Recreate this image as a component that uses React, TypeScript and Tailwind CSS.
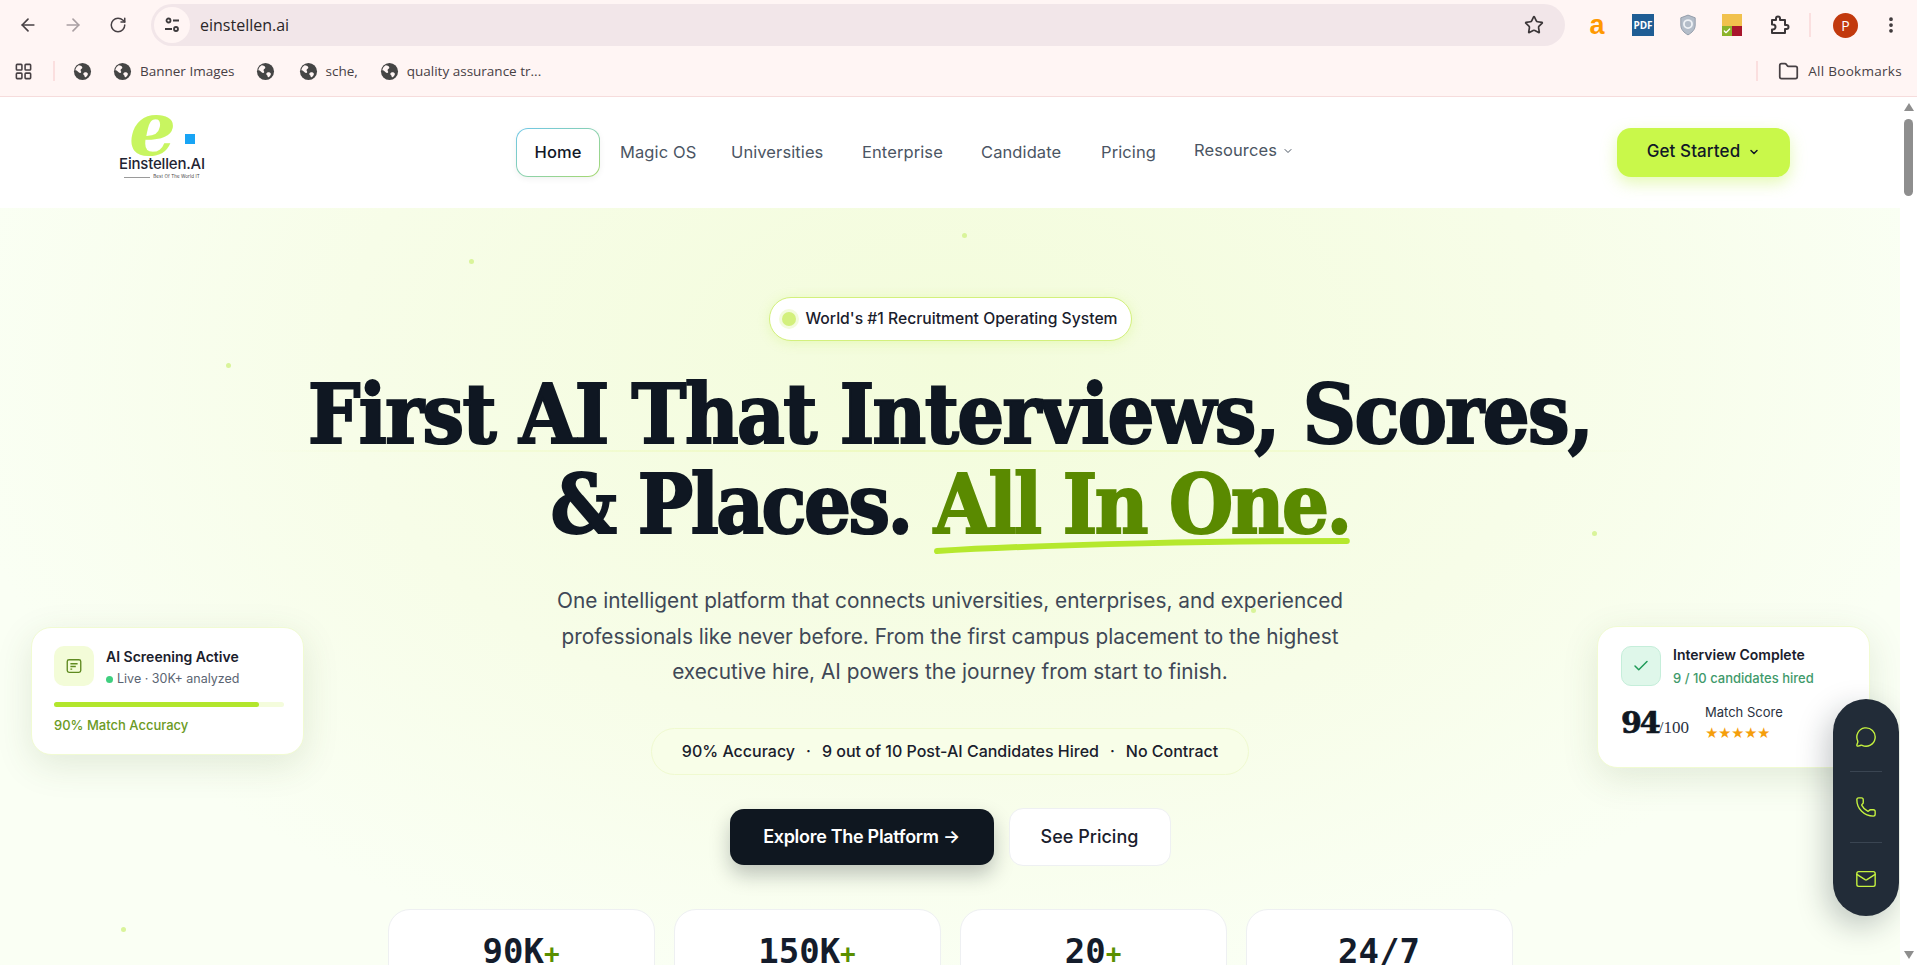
import React from "react";
import {
  ArrowLeft,
  ArrowRight,
  Check,
  ChevronDown,
  Folder,
  LayoutGrid,
  Mail,
  MessageCircle,
  MoreVertical,
  Phone,
  RotateCw,
  Star,
} from "lucide-react";

const body = "font-['Inter',sans-serif]";

function GlobeIcon() {
  return (
    <svg viewBox="0 0 20 20" className="h-[19px] w-[19px] shrink-0">
      <circle cx="10" cy="10" r="9" fill="#454545" />
      <path
        d="M6 3.5c2 .2 3.6 1 3.8 2.2.2 1.4-1.6 1.4-1.8 2.6-.2 1 1 1.4.6 2.6-.4 1-2 .6-3-.4C4.300 9.200 3 8.500 2.400 8.800 2.800 6.400 4 4.600 6 3.500zM12 11c1.400-.4 3 .2 3.600 1 .4.800-.6 2.800-2 3.800-.8.600-1.400.2-1.400-.8 0-1-1.600-1.600-1.400-2.600.1-.6.800-1.200 1.200-1.400z"
        fill="#fff5f4"
      />
    </svg>
  );
}

function Browser() {
  return (
    <div className="h-[97px] shrink-0 border-b border-[#f6dcdc] bg-[#fff5f4] font-['Open_Sans',sans-serif] text-[#474044]">
      <div className="flex h-[49px] items-center pt-[1px]">
        <ArrowLeft className="ml-[18px] h-5 w-5" strokeWidth={2} />
        <ArrowRight className="ml-[25px] h-5 w-5 text-[#a99fa2]" strokeWidth={2} />
        <RotateCw className="ml-[26px] h-[18px] w-[18px]" strokeWidth={2} />
        <div className="ml-[24px] flex h-[42px] w-[1414px] items-center rounded-full bg-[#f2e6e9] pl-[3px] pr-[21px]">
          <div className="flex h-9 w-9 items-center justify-center rounded-full bg-[#fff5f4]">
            <svg viewBox="0 0 20 20" className="h-5 w-5" fill="none" stroke="#3d3a3c" strokeWidth="1.8">
              <circle cx="6.500" cy="5.500" r="2" />
              <path d="M11 5.500h6M3 14h7" />
              <circle cx="14" cy="14" r="2" />
            </svg>
          </div>
          <span className="ml-[10px] text-[16px] text-[#2a2628]">einstellen.ai</span>
          <Star className="ml-auto h-5 w-5 text-[#3b3638]" strokeWidth={2} />
        </div>
        <span className="ml-[22px] w-[20px] text-center font-['Liberation_Sans',sans-serif] text-[27px] font-bold leading-none text-[#ff9900]">
          a
        </span>
        <div className="ml-[25px] flex h-[22px] w-[22px] items-center justify-center bg-[#1f5d94] text-[10px] font-bold text-white">
          PDF
        </div>
        <svg viewBox="0 0 20 24" className="ml-[25px] h-[22px] w-[18px]">
          <path d="M10 1l8 3v8c0 5-3.500 8.500-8 11-4.500-2.500-8-6-8-11V4z" fill="#b4bdc9" stroke="#8e98a6" />
          <circle cx="10" cy="11" r="4.500" fill="none" stroke="#eef1f5" strokeWidth="2" />
        </svg>
        <div className="ml-[25px] flex h-[22px] w-[20px] flex-col">
          <div className="h-[12px] bg-[#f1c14d]" />
          <div className="flex h-[10px]">
            <div className="flex flex-1 items-center justify-center bg-[#8cb32b]">
              <Check className="h-2 w-2 text-white" strokeWidth={4} />
            </div>
            <div className="flex-1 bg-[#a8162c]" />
          </div>
        </div>
        <svg viewBox="0 0 22 22" className="ml-[26px] h-[22px] w-[22px]" fill="none" stroke="#3b3638" strokeWidth="2" strokeLinejoin="round">
          <path d="M4 6h4V4.500a2 2 0 014 0V6h5v5h1.500a2 2 0 010 4H17v4H4v-3.500h1a2.500 2.500 0 000-5H4z" />
        </svg>
        <div className="ml-[19px] h-[24px] w-[2px] bg-[#fbdfdf]" />
        <div className="ml-[22px] flex h-[25px] w-[25px] items-center justify-center rounded-full bg-[#c2390d] text-[14px] text-white">
          P
        </div>
        <MoreVertical className="ml-[23px] h-5 w-5 text-[#3b3638]" strokeWidth={2.500} />
      </div>
      <div className="flex h-[44px] items-center text-[13.500px]">
        <LayoutGrid className="ml-[14px] h-[19px] w-[19px]" strokeWidth={2} />
        <div className="ml-[20px] h-[20px] w-[2px] bg-[#fbdfdf]" />
        <div className="ml-[18px]">
          <GlobeIcon />
        </div>
        <div className="ml-[21px] flex items-center gap-[8px]">
          <GlobeIcon />
          <span>Banner Images</span>
        </div>
        <div className="ml-[21px]">
          <GlobeIcon />
        </div>
        <div className="ml-[24px] flex items-center gap-[8px]">
          <GlobeIcon />
          <span>sche,</span>
        </div>
        <div className="ml-[22px] flex items-center gap-[8px]">
          <GlobeIcon />
          <span>quality assurance tr...</span>
        </div>
        <div className="ml-auto h-[20px] w-[2px] bg-[#fbdfdf]" />
        <Folder className="ml-[20px] h-[21px] w-[21px]" strokeWidth={2} />
        <span className="ml-[9px] mr-[15px] tracking-[0.3px]">All Bookmarks</span>
      </div>
    </div>
  );
}

function Logo() {
  return (
    <div className="mb-[6px] ml-[117px] flex w-[90px] flex-col items-center">
      <div className="relative h-[36px] w-[90px]">
        <span className="absolute left-[12px] top-[-7px] font-['DejaVu_Serif',serif] text-[74px] font-bold italic leading-[36px] text-[#c8f560]">
          e
        </span>
        <div className="absolute left-[68px] top-[16px] h-[10px] w-[10px] bg-[#18a4f5]" />
      </div>
      <span className="text-[15px] font-medium leading-[20px] tracking-[-0.2px] text-[#1f2433]">Einstellen.AI</span>
      <div className="flex items-center gap-[3px]">
        <div className="h-px w-[26px] bg-[#9a9a9a]" />
        <span className="text-[4.500px] leading-[6px] text-[#444]">Best Of The World IT</span>
      </div>
    </div>
  );
}

function Nav() {
  const links = [
    { label: "Magic OS", width: "w-[73px]", gap: "ml-[20px]" },
    { label: "Universities", width: "w-[93px]", gap: "ml-[38px]" },
    { label: "Enterprise", width: "w-[81px]", gap: "ml-[38px]" },
    { label: "Candidate", width: "w-[82px]", gap: "ml-[38px]" },
    { label: "Pricing", width: "w-[54px]", gap: "ml-[38px]" },
  ];
  return (
    <div className="flex h-[111px] shrink-0 items-center bg-white pb-[1px] text-[16.500px] tracking-[0.1px] text-[#4b5563]">
      <Logo />
      <div className="ml-[309px] h-[49px] w-[84px] rounded-[12px] bg-gradient-to-br from-[#6ec6e8] to-[#a5d86a] p-px shadow-[0_2px_6px_rgba(0,0,0,0.06)]">
        <div className="flex h-full w-full items-center justify-center rounded-[11px] bg-white font-medium text-[#111827]">
          Home
        </div>
      </div>
      {links.map((link) => (
        <span key={link.label} className={`${link.gap} ${link.width} whitespace-nowrap`}>
          {link.label}
        </span>
      ))}
      <span className="mb-[3px] ml-[39px] flex items-center gap-[5px]">
        Resources
        <ChevronDown className="h-3 w-3" />
      </span>
      <button className="ml-[323px] flex h-[49px] w-[173px] items-center justify-center gap-[8px] rounded-[14px] bg-[#c9f84a] text-[17px] font-medium text-[#111827] shadow-[0_6px_16px_rgba(190,240,70,0.4)]">
        Get Started
        <ChevronDown className="h-3 w-3" strokeWidth={3} />
      </button>
    </div>
  );
}

function AiCard() {
  return (
    <div className="absolute left-[31px] top-[419px] z-10 h-[128px] w-[273px] rounded-[20px] border border-[#f1fbd3] bg-white px-[22px] pt-[18px] shadow-[0_10px_36px_rgba(60,90,40,0.13)]">
      <div className="flex gap-[12px]">
        <div className="flex h-10 w-10 items-center justify-center rounded-[10px] bg-[#f3fcd8]">
          <svg viewBox="0 0 20 20" className="h-[18px] w-[18px]" fill="none" stroke="#5f8a20" strokeWidth="1.500">
            <rect x="2.500" y="3" width="15" height="14" rx="2" />
            <path d="M6 7.500h8M6 10.500h6M6 13.500h2" />
          </svg>
        </div>
        <div className="pt-[1px]">
          <p className="text-[14px] font-semibold leading-[20px] text-[#1a202c]">AI Screening Active</p>
          <p className="mt-[3px] flex items-center gap-[4px] text-[12.500px] leading-[18px] text-[#5b6472]">
            <span className="h-[7px] w-[7px] rounded-full bg-[#3fcf7f]" />
            Live · 30K+ analyzed
          </p>
        </div>
      </div>
      <div className="mt-[14px] h-[5px] w-[230px] rounded-full bg-[#f4fcdc]">
        <div className="h-[5px] w-[205px] rounded-full bg-[#b2e62c]" />
      </div>
      <p className="mt-[9px] text-[13px] font-medium leading-[18px] text-[#6b9a24]">90% Match Accuracy</p>
    </div>
  );
}

function InterviewCard() {
  return (
    <div className="absolute right-[30px] top-[418px] z-10 h-[142px] w-[273px] rounded-[20px] border border-[#f1fbd3] bg-white pl-[23px] pt-[19px] shadow-[0_10px_36px_rgba(60,90,40,0.13)]">
      <div className="flex gap-[12px]">
        <div className="flex h-10 w-10 items-center justify-center rounded-[10px] border border-[#c5eeda] bg-[#dff7ea]">
          <Check className="h-[18px] w-[18px] text-[#1f9a58]" strokeWidth={2} />
        </div>
        <div>
          <p className="text-[14px] font-semibold leading-[18px] text-[#1a202c]">Interview Complete</p>
          <p className="mt-[5px] text-[13px] font-medium leading-[18px] text-[#3f9a6b]">9 / 10 candidates hired</p>
        </div>
      </div>
      <div className="mt-[16px] flex">
        <p className="w-[84px] pt-[2px] font-['DejaVu_Serif',serif] text-[30px] font-bold leading-[36px] tracking-[-2px] text-[#0f1722] [-webkit-text-stroke:0.7px_#0f1722]">
          94<span className="font-['Liberation_Serif',serif] text-[17px] font-normal tracking-normal text-[#2a3140] [-webkit-text-stroke:0]">/100</span>
        </p>
        <div>
          <p className="text-[13px] leading-[18px] text-[#2a3140]">Match Score</p>
          <p className="mt-[3px] text-[13px] leading-[18px] tracking-[-0.6px] text-[#f59e0b]">★★★★★</p>
        </div>
      </div>
    </div>
  );
}

function ContactRail() {
  return (
    <div className="absolute right-px top-[491px] z-20 flex h-[217px] w-[66px] flex-col items-center rounded-full bg-[#222c38] text-[#c6f33f] shadow-[-6px_10px_30px_rgba(20,30,40,0.25)]">
      <div className="flex h-[72px] w-full items-center justify-center pt-[4px]">
        <MessageCircle className="h-[22px] w-[22px]" strokeWidth={1.500} />
      </div>
      <div className="h-px w-8 bg-[#3a4552]" />
      <div className="flex h-[70px] w-full items-center justify-center">
        <Phone className="h-[22px] w-[22px]" strokeWidth={1.500} />
      </div>
      <div className="h-px w-8 bg-[#3a4552]" />
      <div className="flex h-[72px] w-full items-center justify-center">
        <Mail className="h-[22px] w-[22px]" strokeWidth={1.500} />
      </div>
    </div>
  );
}

function Stat({ value, plus }: { value: string; plus?: boolean }) {
  return (
    <div className="h-[120px] w-[267px] rounded-t-[22px] border border-[#eef0f2] bg-white pt-[21px] text-center font-['DejaVu_Sans_Mono',monospace] text-[34px] font-bold leading-[40px] text-[#141c2b]">
      {value}
      {plus && <span className="text-[26px] text-[#5a8f00]">+</span>}
    </div>
  );
}

function Hero() {
  const dots = [
    "left-[962px] top-[25px]",
    "left-[469px] top-[51px]",
    "left-[226px] top-[155px]",
    "left-[1592px] top-[323px]",
    "left-[121px] top-[719px]",
    "left-[1251px] top-[400px]",
  ];
  return (
    <div className={`relative flex flex-1 flex-col items-center overflow-hidden bg-[radial-gradient(ellipse_at_50%_20%,#f3fcdb_0%,#f7fde8_45%,#fafff4_75%)] pt-[89px] ${body}`}>
      {dots.map((pos) => (
        <div key={pos} className={`absolute ${pos} h-[5px] w-[5px] rounded-full bg-[#d9f49a]`} />
      ))}
      <div className="absolute left-[250px] right-[250px] top-[242px] h-[2px] bg-gradient-to-r from-transparent via-[#eefabf] to-transparent" />

      <div className="relative flex h-[44px] w-[363px] shrink-0 items-center justify-center gap-[9px] rounded-full border border-[#d3f07d] bg-white text-[15.700px] font-medium text-[#1a202c] shadow-[0_2px_12px_rgba(190,240,70,0.25)]">
        <span className="h-[14px] w-[14px] rounded-full bg-[#d3f07d] ring-[3px] ring-[#f3fbdc]" />
        World's #1 Recruitment Operating System
      </div>

      <h1 className="relative mt-[28px] shrink-0 whitespace-nowrap text-center font-['DejaVu_Serif_Condensed','DejaVu_Serif',serif] text-[82px] font-bold leading-[90px] tracking-[-1.600px] text-[#0f1722] [-webkit-text-stroke:2px_currentColor]">
        First AI That Interviews, Scores,
        <br />
        <span className="tracking-[-2.500px]">
          &amp; Places.{" "}
          <span className="relative inline-block text-[#5a8a00]">
            All In One.
            <svg viewBox="0 0 420 20" preserveAspectRatio="none" className="absolute bottom-[-7px] left-0 h-[20px] w-full">
              <path d="M3 15C120 8 300 5 417 5" fill="none" stroke="#b5e82e" strokeWidth="6" strokeLinecap="round" />
            </svg>
          </span>
        </span>
      </h1>

      <p className="mt-[34px] w-[800px] shrink-0 text-center text-[20.800px] leading-[35.500px] text-[#3f4856]">
        One intelligent platform that connects universities, enterprises, and experienced
        <br />
        professionals like never before. From the first campus placement to the highest
        <br />
        executive hire, AI powers the journey from start to finish.
      </p>

      <div className="mt-[38px] flex h-[47px] w-[598px] shrink-0 items-center justify-center gap-[11px] rounded-full border border-[#f0fad0] bg-[#f8fee8] text-[16px] font-medium text-[#1a202c]">
        <span>90% Accuracy</span>
        <span>·</span>
        <span>9 out of 10 Post-AI Candidates Hired</span>
        <span>·</span>
        <span>No Contract</span>
      </div>

      <div className="mt-[33px] flex shrink-0 items-center gap-[15px]">
        <button className="h-[56px] w-[264px] rounded-[14px] bg-[#0f1720] text-[18px] font-semibold tracking-[-0.3px] text-white shadow-[0_10px_20px_rgba(15,23,32,0.25)]">
          Explore The Platform →
        </button>
        <button className="h-[58px] w-[162px] rounded-[14px] border border-[#eef0f2] bg-white text-[18px] font-medium text-[#1a202c]">
          See Pricing
        </button>
      </div>

      <div className="mt-[43px] flex shrink-0 gap-[19px]">
        <Stat value="90K" plus />
        <Stat value="150K" plus />
        <Stat value="20" plus />
        <Stat value="24/7" />
      </div>

      <AiCard />
      <InterviewCard />
      <ContactRail />
    </div>
  );
}

function Scrollbar() {
  return (
    <div className="flex w-[17px] shrink-0 flex-col items-center bg-white pt-[6px]">
      <div className="h-0 w-0 border-x-[5px] border-b-[8px] border-x-transparent border-b-[#8e8e8e]" />
      <div className="mt-[8px] h-[77px] w-[9px] rounded-full bg-[#8e8e8e]" />
      <div className="mb-[6px] mt-auto h-0 w-0 border-x-[5px] border-t-[8px] border-x-transparent border-t-[#8e8e8e]" />
    </div>
  );
}

export default function App() {
  return (
    <div className={`flex h-screen w-full flex-col overflow-hidden bg-white ${body}`}>
      <Browser />
      <div className="flex min-h-0 flex-1">
        <div className="flex min-w-0 flex-1 flex-col">
          <Nav />
          <Hero />
        </div>
        <Scrollbar />
      </div>
    </div>
  );
}
